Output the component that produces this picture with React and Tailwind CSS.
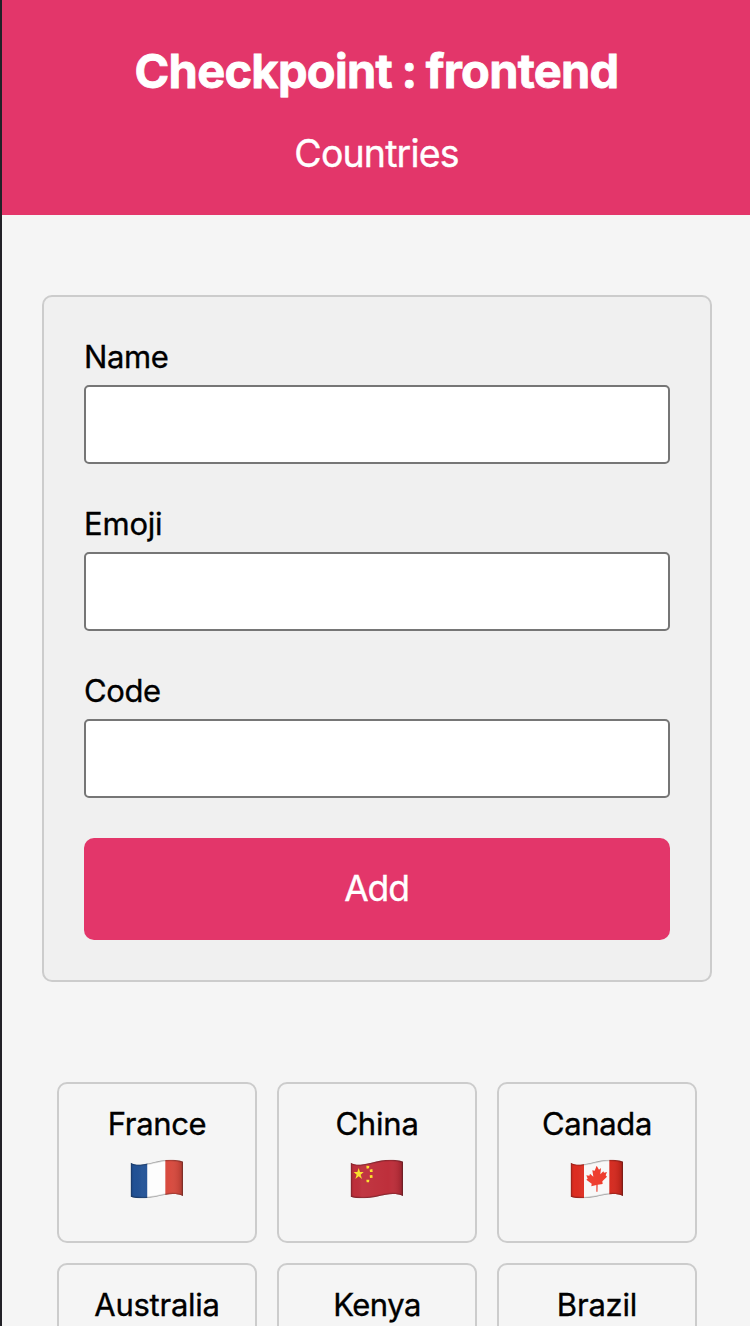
import React from "react";

const WAVE =
  "M32 38 C42 44 54 45 66 43.5 C84 41.500 104 35.500 124 31.500 C146 27.500 172 29 189 35 L189 138 C174 131.500 156 131 138 134 C116 138 96 143.500 74 144.500 C58 145 44 144 32 140 Z";

function Flag({ id, label, children }) {
  return (
    <svg
      role="img"
      aria-label={label}
      viewBox="30 27 162 120"
      className="mt-4 h-10 w-[54px]"
    >
      <defs>
        <clipPath id={`${id}-clip`}>
          <path d={WAVE} />
        </clipPath>
        <linearGradient id={`${id}-shade`} x1="0" x2="1" y1="0" y2="0">
          <stop offset="0" stopColor="#000" stopOpacity="0.12" />
          <stop offset="0.08" stopColor="#000" stopOpacity="0" />
          <stop offset="0.22" stopColor="#fff" stopOpacity="0.04" />
          <stop offset="0.72" stopColor="#fff" stopOpacity="0" />
          <stop offset="0.9" stopColor="#000" stopOpacity="0.08" />
          <stop offset="1" stopColor="#000" stopOpacity="0.25" />
        </linearGradient>
      </defs>
      <g clipPath={`url(#${id}-clip)`}>
        {children}
        <rect x="30" y="27" width="162" height="120" fill={`url(#${id}-shade)`} />
        <path d={WAVE} fill="none" stroke="#000" strokeOpacity="0.12" strokeWidth="9" />
        <path d={WAVE} fill="none" stroke="#222" strokeOpacity="0.3" strokeWidth="4" />
      </g>
    </svg>
  );
}

function FranceFlag() {
  return (
    <Flag id="fr" label="France">
      <rect x="30" y="27" width="53" height="120" fill="#215195" />
      <rect x="82" y="27" width="54" height="120" fill="#fdfdfd" />
      <rect x="136" y="27" width="56" height="120" fill="#d84b3f" />
    </Flag>
  );
}

function ChinaFlag() {
  return (
    <Flag id="cn" label="China">
      <rect x="30" y="27" width="162" height="120" fill="#be2f3b" />
      <g fill="#fbe22b">
        <path d="M56 54 L60 66 L71 66 L62 74 L66 87 L56 79 L46 87 L50 74 L41 66 L52 66 Z" />
        <path d="M79 47 L88 48 L87 55 L80 56 Z" />
        <path d="M89 59 L97 57 L98 66 L90 66 Z" />
        <path d="M89 76 L97 75 L98 83 L90 84 Z" />
        <path d="M79 89 L88 89 L87 97 L80 97 Z" />
      </g>
    </Flag>
  );
}

function CanadaFlag() {
  return (
    <Flag id="ca" label="Canada">
      <rect x="30" y="27" width="42" height="120" fill="#dd2c20" />
      <rect x="72" y="27" width="76" height="120" fill="#f8f8f8" />
      <rect x="148" y="27" width="44" height="120" fill="#d62b20" />
      <path
        fill="#ee3b2c"
        d="M110 47 L117 59 L123 54 L121 73 L130 64 L132 68 L141 66 L137 76 L141 80 L127 94 L128 102 L113 104 L112.500 125 L109 125 L109 105 L94 109 L95 101 L79 89 L83 86 L79 76 L88 77 L90 71 L100 80 L97 61 L104 62 Z"
      />
    </Flag>
  );
}

const countries = [
  { name: "France", Icon: FranceFlag, text: "tracking-[-0.35px]" },
  { name: "China", Icon: ChinaFlag, text: "tracking-[-0.2px]" },
  { name: "Canada", Icon: CanadaFlag, text: "tracking-[-0.35px]" },
  { name: "Australia", text: "tracking-[-0.25px]" },
  { name: "Kenya", text: "tracking-[-0.5px]" },
  { name: "Brazil", text: "tracking-[-0.2px]" },
];

function Field({ id, label, text }) {
  return (
    <div className="flex flex-col gap-[9px] pt-px">
      <label htmlFor={id} className={`h-[38px] text-[31px] leading-[38px] ${text}`}>
        {label}
      </label>
      <input
        id={id}
        type="text"
        className="h-[79px] w-full rounded-[5px] border-2 border-[#767676] bg-white px-2 text-[31px] outline-none"
      />
    </div>
  );
}

export default function App() {
  return (
    <div className="h-[1326px] w-[750px] overflow-hidden border-l-2 border-[#222127] bg-[#f5f5f5] font-['Inter',sans-serif] text-black [-webkit-text-stroke:0.35px_currentColor]">
      <header className="flex h-[215px] flex-col items-center gap-[31px] bg-[#e3366a] pt-[42px] text-white">
        <h1 className="pl-px text-[47px] leading-[58px] font-bold tracking-[-0.72px] [word-spacing:-1px] whitespace-nowrap [-webkit-text-stroke:0.8px_currentColor]">
          Checkpoint : frontend
        </h1>
        <p className="pl-px text-[37.5px] leading-[46px] tracking-[-0.85px]">Countries</p>
      </header>
      <main className="px-10 pt-20 pr-[38px]">
        <form
          onSubmit={(e) => e.preventDefault()}
          className="flex flex-col gap-10 rounded-[10px] border-2 border-[#ccc] bg-[#f0f0f0] p-10"
        >
          <Field id="name" label="Name" text="tracking-[-0.4px]" />
          <Field id="emoji" label="Emoji" text="tracking-[-0.2px]" />
          <Field id="code" label="Code" text="tracking-[-0.4px]" />
          <button
            type="submit"
            className="h-[102px] rounded-[10px] bg-[#e3366a] pr-px pb-0.5 text-[35.5px] leading-[43px] tracking-[-1.2px] text-white"
          >
            Add
          </button>
        </form>
        <section className="mt-[100px] grid grid-cols-[200px_200px_200px] justify-center gap-5">
          {countries.map(({ name, Icon, text }) => (
            <article
              key={name}
              className="flex h-[161px] flex-col items-center rounded-[10px] border-2 border-[#ccc] pt-[21px]"
            >
              <h2 className={`text-[31px] leading-[38px] ${text}`}>{name}</h2>
              {Icon && <Icon />}
            </article>
          ))}
        </section>
      </main>
    </div>
  );
}
